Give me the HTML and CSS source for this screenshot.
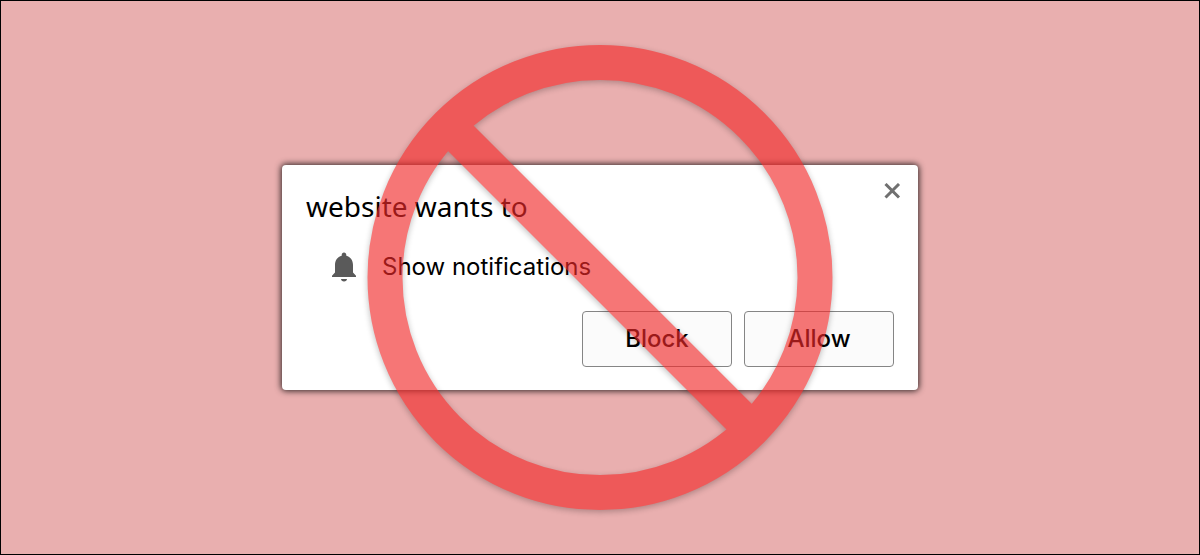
FILE: index.html
```html
<!DOCTYPE html>
<html lang="en">
<head>
<meta charset="utf-8">
<title>Notification permission</title>
<link rel="stylesheet" href="styles.css">
</head>
<body>
<main class="stage">
  <section class="prompt" role="dialog" aria-labelledby="prompt-title">
    <header class="prompt-header">
      <h1 class="prompt-title" id="prompt-title">website wants to</h1>
      <button class="close" type="button" aria-label="Close">
        <svg width="18" height="16" viewBox="0 0 18 16" aria-hidden="true"><path d="M2.500 1l13.500 13.500M16 1L2.500 14.500" stroke="#707070" stroke-width="3"/></svg>
      </button>
    </header>
    <div class="permission">
      <svg width="26" height="30" viewBox="0 0 26 30" fill="#5a5a5a" aria-hidden="true">
        <path d="M13 .5c1.400 0 2.300 1 2.300 2.500v.8c4.200 1.200 6.700 4.600 6.700 9.200v7.500l3 3.200V25H1v-1.300l3-3.200V13c0-4.600 2.500-8 6.700-9.200V3c0-1.500.9-2.500 2.300-2.500z"/>
        <path d="M10 27h6c0 1.500-1.300 2.500-3 2.500s-3-1-3-2.500z"/>
      </svg>
      <span>Show notifications</span>
    </div>
    <div class="actions">
      <button class="action" type="button">Block</button>
      <button class="action" type="button">Allow</button>
    </div>
  </section>
  <svg class="ban" width="500" height="500" viewBox="0 0 500 500" aria-hidden="true">
    <g class="ban-sign" fill="none" stroke="#f12a2a">
      <circle cx="250" cy="249.500" r="215" stroke-width="35"/>
      <path d="M103 102.500l294 294" stroke-width="36"/>
    </g>
  </svg>
</main>
</body>
</html>
```
FILE: styles.css
```css
* {
  box-sizing: border-box;
}

body {
  margin: 0;
}

.stage {
  position: relative;
  display: flex;
  align-items: center;
  justify-content: center;
  min-height: 100vh;
  overflow: hidden;
  border: 1px solid #000;
  background: #e9afaf;
}

.prompt {
  width: 100%;
  max-width: 636px;
  padding: 17px 24px 23px;
  border-radius: 4px;
  background: #fff;
  box-shadow: 0 0 6px 1px rgba(0, 0, 0, 0.8);
  color: #000;
  font: 24px/32px Inter, "Liberation Sans", sans-serif;
}

.prompt-header {
  display: flex;
  align-items: flex-start;
  justify-content: space-between;
}

.prompt-title {
  margin: 6px 0 0;
  font: 400 28px/36px "Noto Sans", sans-serif;
}

.close {
  display: flex;
  margin-right: -8px;
  padding: 1px;
  border: 0;
  background: none;
}

.permission {
  display: flex;
  align-items: center;
  gap: 25px;
  margin: 27px 25px 28px;
}

.actions {
  display: flex;
  justify-content: flex-end;
  gap: 12px;
}

.action {
  width: 150px;
  height: 56px;
  padding: 0;
  border: 1px solid #858585;
  border-radius: 4px;
  background: #fbfbfb;
  color: #000;
  font: inherit;
  font-weight: 500;
}

/* The sign covers the prompt; clicks pass through to the buttons. */
.ban {
  position: absolute;
  top: 50%;
  left: 50%;
  transform: translate(-50%, -50%);
  opacity: 0.64;
  pointer-events: none;
}

.ban-sign {
  filter: drop-shadow(0 2px 3px rgba(0, 0, 0, 0.4));
}
```
